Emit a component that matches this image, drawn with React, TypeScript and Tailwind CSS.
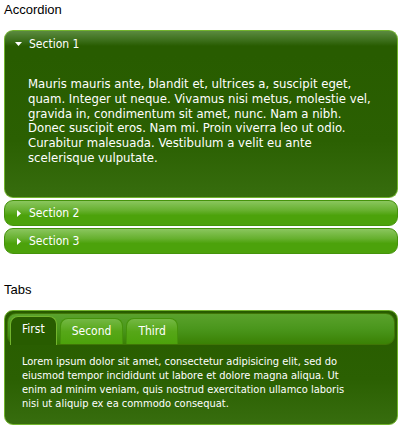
import React from 'react';

const FONT = { fontFamily: '"DejaVu Sans Condensed", "DejaVu Sans", Verdana, sans-serif' };

const accordionLines = [
  'Mauris mauris ante, blandit et, ultrices a, suscipit eget,',
  'quam. Integer ut neque. Vivamus nisi metus, molestie vel,',
  'gravida in, condimentum sit amet, nunc. Nam a nibh.',
  'Donec suscipit eros. Nam mi. Proin viverra leo ut odio.',
  'Curabitur malesuada. Vestibulum a velit eu ante',
  'scelerisque vulputate.',
];

const tabLines = [
  'Lorem ipsum dolor sit amet, consectetur adipisicing elit, sed do',
  'eiusmod tempor incididunt ut labore et dolore magna aliqua. Ut',
  'enim ad minim veniam, quis nostrud exercitation ullamco laboris',
  'nisi ut aliquip ex ea commodo consequat.',
];

const ArrowDown = () => (
  <svg width="7" height="4" viewBox="0 0 7 4" className="mr-[7px]">
    <path d="M0 0h7L3.5 4z" fill="#fff" />
  </svg>
);

const ArrowRight = () => (
  <svg width="4" height="7" viewBox="0 0 4 7" className="ml-[2px] mr-[8px]">
    <path d="M0 0l4 3.5L0 7z" fill="#fff" />
  </svg>
);

const ClosedHeader = ({ label }: { label: string }) => (
  <div className="mt-[2px] h-[26px] flex items-center pl-[10px] rounded-[9px] border border-[#45930b] bg-[linear-gradient(to_bottom,#8ac65e_0%,#66b02e_40%,#4ca20b_60%,#4ca20b_100%)] text-white text-[12px]">
    <ArrowRight />
    {label}
  </div>
);

const Tab = ({ label, active }: { label: string; active?: boolean }) =>
  active ? (
    <div className="h-[29px] -mb-px px-[11px] pt-[5px] rounded-t-[8px] border border-b-0 border-[#72b42d] bg-[#285c00] text-white text-[12px] leading-[15px]">
      {label}
    </div>
  ) : (
    <div className="h-[26px] px-[11px] pt-[5px] rounded-t-[8px] border border-b-0 border-[#45930b] bg-[linear-gradient(to_bottom,#74b844_0%,#56a718_50%,#4ca20b_100%)] text-white text-[12px] leading-[15px]">
      {label}
    </div>
  );

export default function App() {
  return (
    <div className="w-[402px] h-[429px] bg-white px-1 overflow-hidden" style={FONT}>
      <h2 className="text-[13px] leading-[18px] pt-[1px] text-black" style={{ fontFamily: '"Liberation Sans", Arial, sans-serif' }}>
        Accordion
      </h2>

      <div className="mt-[11px] w-[394px]">
        <div className="h-[26px] flex items-center pl-[10px] rounded-t-[9px] border border-b-0 border-[#72b42d] bg-[linear-gradient(to_bottom,#5b8a40_0%,#3a6d18_40%,#285c00_60%,#285c00_100%)] text-white text-[12px]">
          <ArrowDown />
          {'Section 1'}
        </div>
        <div className="h-[142px] rounded-b-[9px] border border-t-0 border-[#72b42d] bg-[linear-gradient(to_bottom,#285c00_0%,#2b6002_60%,#376d0e_100%)] pl-[23px] pt-[21px] text-white text-[13px] leading-[14.8px]">
          {accordionLines.map((l) => (
            <div key={l} className="whitespace-nowrap">{l}</div>
          ))}
        </div>
        <ClosedHeader label="Section 2" />
        <ClosedHeader label="Section 3" />
      </div>

      <h2 className="mt-[27px] text-[13px] leading-[18px] text-black" style={{ fontFamily: '"Liberation Sans", Arial, sans-serif' }}>
        Tabs
      </h2>

      <div className="mt-[11px] w-[394px] rounded-[9px] border border-[#72b42d] bg-[linear-gradient(to_bottom,#285c00_0%,#2b6002_60%,#376d0e_100%)] p-[2px]">
        <div className="h-[32px] flex items-end gap-[3px] px-[2px] rounded-[9px] border border-[#3f7506] bg-[linear-gradient(to_bottom,#5aa22c_0%,#4a961c_50%,#3a8104_100%)]">
          <Tab label="First" active />
          <Tab label="Second" />
          <Tab label="Third" />
        </div>
        <div className="pl-[15px] pt-[10px] pb-[11px] text-white text-[11px] leading-[14px]">
          {tabLines.map((l) => (
            <div key={l} className="whitespace-nowrap">{l}</div>
          ))}
        </div>
      </div>
    </div>
  );
}
